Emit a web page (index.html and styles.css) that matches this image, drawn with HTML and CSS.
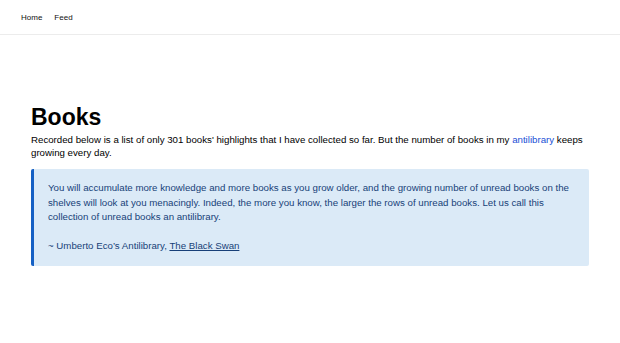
FILE: index.html
```html
<!DOCTYPE html>
<html lang="en">
<head>
<meta charset="utf-8">
<title>Books</title>
<link rel="stylesheet" href="styles.css">
</head>
<body>
<header class="topbar">
  <nav class="nav">
    <a class="nav-link" href="#">Home</a>
    <a class="nav-link" href="#">Feed</a>
  </nav>
</header>
<main class="page">
  <h1 class="title">Books</h1>
  <p class="intro">Recorded below is a list of only 301 books' highlights that I have collected so far. But the number of books in my <a class="link" href="#">antilibrary</a> keeps growing every day.</p>
  <blockquote class="quote">
    <p class="quote-text">You will accumulate more knowledge and more books as you grow older, and the growing number of unread books on the shelves will look at you menacingly. Indeed, the more you know, the larger the rows of unread books. Let us call this collection of unread books an antilibrary.</p>
    <p class="quote-source">~ Umberto Eco’s Antilibrary, <a class="quote-link" href="#">The Black Swan</a></p>
  </blockquote>
</main>
</body>
</html>
```
FILE: styles.css
```css
html, body {
  margin: 0;
  padding: 0;
  background: #ffffff;
}
body {
  font-family: "Liberation Sans", Arial, Helvetica, sans-serif;
  color: #000;
}
.topbar {
  height: 35px;
  border-bottom: 1px solid #ececec;
  box-sizing: border-box;
}
.nav {
  display: flex;
  gap: 12px;
  padding: 11px 0 0 21px;
}
.nav-link {
  font-size: 8px;
  color: #111;
  text-decoration: none;
  line-height: 13px;
}
.page {
  padding: 68px 31px 0 31px;
}
.title {
  margin: 0;
  font-size: 23px;
  font-weight: bold;
  line-height: 28px;
  color: #000;
}
.intro {
  margin: 2px 0 0 0;
  font-size: 9.7px;
  line-height: 13px;
  color: #000;
}
.link {
  color: #1a4fd6;
  text-decoration: none;
}
.quote {
  margin: 10px 0 0 0;
  background: #dbeaf7;
  border-left: 3px solid #1560c4;
  border-radius: 2px;
  padding: 12px 14px 12px 14px;
  color: #173f78;
  font-size: 9.7px;
  line-height: 14.5px;
}
.quote-text {
  margin: 0 0 14.5px 0;
}
.quote-source {
  margin: 0;
}
.quote-link {
  color: #173f78;
  text-decoration: underline;
}
```
